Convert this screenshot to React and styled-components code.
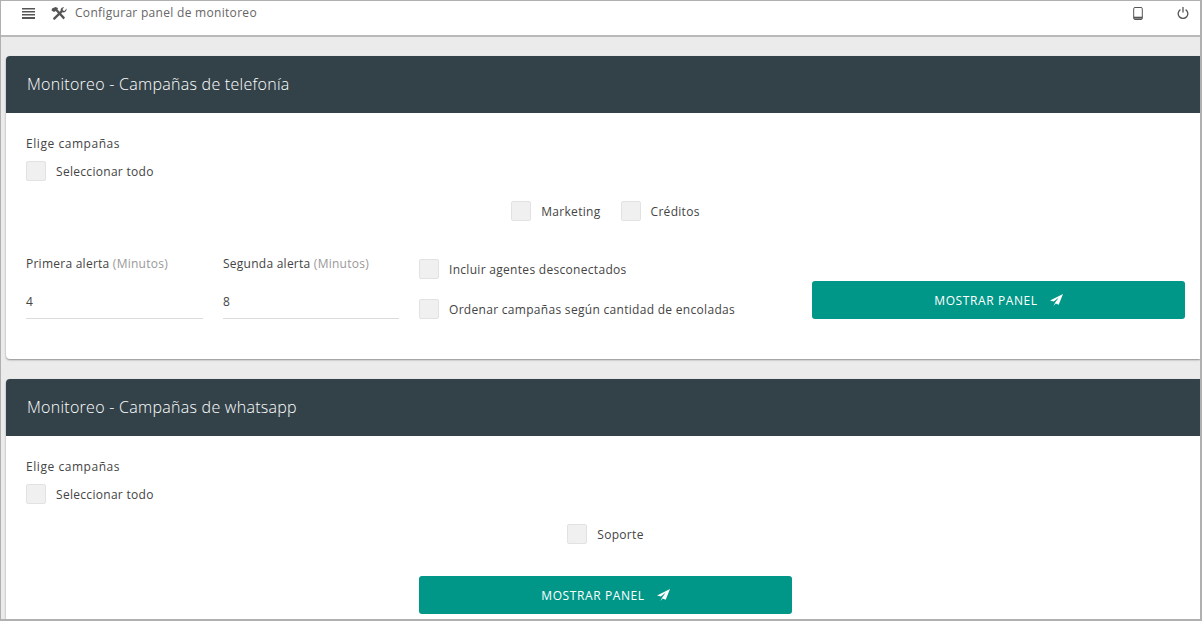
import React from 'react';
import styled, { createGlobalStyle } from 'styled-components';

const Global = createGlobalStyle`
  html, body { margin: 0; padding: 0; background: #fff; }
  * { box-sizing: border-box; }
  body { font-family: "Open Sans", "Noto Sans", sans-serif; color: #333; }
`;
const Frame = styled.div`
  width: 1202px; height: 621px; overflow: hidden; background: #ebebeb;
  border-left: 1px solid #b0b0b0; border-right: 2px solid #b0b0b0; border-bottom: 2px solid #b0b0b0;
  border-top: 1px solid #b0b0b0;
`;
const Header = styled.header`
  height: 36px; background: #fff; border-bottom: 2px solid #b9b9b9;
  display: flex; align-items: flex-start; padding: 3px 11px 0 21px; color: #666;
`;
const HeaderTitle = styled.span`
  font-size: 12px; line-height: 18px; color: #666; margin-left: 8px; letter-spacing: .3px;
`;
const IconSlot = styled.span`
  display: inline-flex; width: ${p => p.$w}px; height: 18px; align-items: center; justify-content: center; color: #555;
  margin-left: ${p => p.$ml || 0}px;
`;
const Spacer = styled.div`flex: 1;`;
const Main = styled.main`padding: 19px 0 0 5px; display: flex; flex-direction: column; gap: 20px;`;
const Card = styled.section`
  background: #fff; border-radius: 4px 0 0 4px; box-shadow: 0 1px 2px rgba(0,0,0,.4);
`;
const CardHead = styled.div`
  height: 57px; background: #334249; color: #fff; display: flex; align-items: center; padding: 0 0 1px 21px;
  font-size: 16px; font-weight: 300; letter-spacing: .27px; border-radius: 4px 0 0 0;
`;
const CardBody = styled.div`padding: 22px 15px 40px 20px;`;
const Label = styled.div`font-size: 12px; line-height: 18px; color: #444; letter-spacing: .25px;`;
const Heading = styled(Label)`letter-spacing: .55px;`;
const Muted = styled.span`color: #999;`;
const Check = styled.label`
  display: inline-flex; align-items: center; gap: 10px; font-size: 12px; color: #444; height: 20px;
  letter-spacing: .3px;
`;
const Box = styled.span`
  width: 20px; height: 20px; background: #f0f0f0; border: 1px solid #e2e2e2; border-radius: 2px; display: block;
`;
const SelectAll = styled.div`margin-top: 8px;`;
const CenterRow = styled.div`
  display: flex; justify-content: center; gap: 20px; margin-top: 20px;
`;
const TightCenterRow = styled(CenterRow)`margin-top: 15px;`;
const FormRow = styled.div`display: flex; margin-top: 31px; align-items: flex-start;`;
const Field = styled.div`width: ${p => p.$w}px; margin-right: 20px; padding-top: 3px;`;
const Value = styled.div`
  margin-top: 14px; height: 32px; line-height: 22px; padding-top: 4px; font-size: 12px; color: #444; border-bottom: 1px solid #dcdcdc;
`;
const Options = styled.div`
  width: 393px; padding-top: 7px; display: flex; flex-direction: column; gap: 20px;
`;
const Button = styled.button`
  height: 38px; width: 373px; background: #009688; color: #fff; border: 0; border-radius: 3px;
  display: flex; align-items: center; justify-content: center; gap: 12px;
  font-family: inherit; font-size: 12px; letter-spacing: .6px; font-weight: 400;
  margin: ${p => p.$m || 0};
  flex-shrink: 0;
`;

const Bars = () => (
  <svg width="13" height="11" viewBox="0 0 13 11" fill="#555"><path d="M0 0h13v1.6H0zM0 3h13v1.6H0zM0 6h13v1.6H0zM0 9h13v2H0z"/></svg>
);
const Tools = () => (
  <svg width="16" height="13" viewBox="0 0 16 13" fill="#555">
    <path d="M1 1.5 4.5 0 7 1 6.5 2.5 14 10.5 12.5 12.5 4.8 4 3 5 .5 3.5z"/>
    <path d="M15.5 1.5a3.2 3.2 0 0 1-4 3.8L4.3 12.3a1.1 1.1 0 0 1-1.9-1.5L9.6 3.7a3 3 0 0 1 3.6-3.4L11.6 2l.4 1.5 1.5.4z"/>
  </svg>
);
const Phone = () => (
  <svg width="10" height="13" viewBox="0 0 10 13" fill="none" stroke="#555" strokeWidth="1">
    <rect x=".7" y=".5" width="8.6" height="12" rx="1.2"/><path d="M.7 10.7h8.6" strokeWidth="2"/>
  </svg>
);
const Power = () => (
  <svg width="12" height="12" viewBox="0 0 12 12" fill="none" stroke="#555" strokeWidth="1.3">
    <path d="M3.4 2.6a4.8 4.8 0 1 0 5.2 0"/><path d="M6 0v5.4"/>
  </svg>
);
const Plane = () => (
  <svg width="13" height="13" viewBox="0 0 13 13" fill="#fff">
    <path d="M13 0 0 6.6l3.8 1 5-4.2-3.6 5-1.8 3.6 2.4-2.6 2.9 1.4z"/>
  </svg>
);

const Choice = ({ children }) => (
  <Check><Box />{children}</Check>
);

export default function App() {
  return (
    <Frame>
      <Global />
      <Header>
        <IconSlot $w={13}><Bars /></IconSlot>
        <IconSlot $w={16} $ml={16}><Tools /></IconSlot>
        <HeaderTitle>Configurar panel de monitoreo</HeaderTitle>
        <Spacer />
        <IconSlot $w={10}><Phone /></IconSlot>
        <IconSlot $w={12} $ml={34}><Power /></IconSlot>
      </Header>
      <Main>
        <Card>
          <CardHead>Monitoreo - Campañas de telefonía</CardHead>
          <CardBody>
            <Heading>Elige campañas</Heading>
            <SelectAll><Choice>Seleccionar todo</Choice></SelectAll>
            <TightCenterRow>
              <Choice>Marketing</Choice>
              <Choice>Créditos</Choice>
            </TightCenterRow>
            <FormRow>
              <Field $w={177}>
                <Label>Primera alerta <Muted>(Minutos)</Muted></Label>
                <Value>4</Value>
              </Field>
              <Field $w={176}>
                <Label>Segunda alerta <Muted>(Minutos)</Muted></Label>
                <Value>8</Value>
              </Field>
              <Options>
                <Choice>Incluir agentes desconectados</Choice>
                <Choice>Ordenar campañas según cantidad de encoladas</Choice>
              </Options>
              <Button $m="29px 0 0 0">MOSTRAR PANEL <Plane /></Button>
            </FormRow>
          </CardBody>
        </Card>
        <Card>
          <CardHead>Monitoreo - Campañas de whatsapp</CardHead>
          <CardBody>
            <Heading>Elige campañas</Heading>
            <SelectAll><Choice>Seleccionar todo</Choice></SelectAll>
            <TightCenterRow>
              <Choice>Soporte</Choice>
            </TightCenterRow>
            <Button $m="32px auto 0">MOSTRAR PANEL <Plane /></Button>
          </CardBody>
        </Card>
      </Main>
    </Frame>
  );
}
